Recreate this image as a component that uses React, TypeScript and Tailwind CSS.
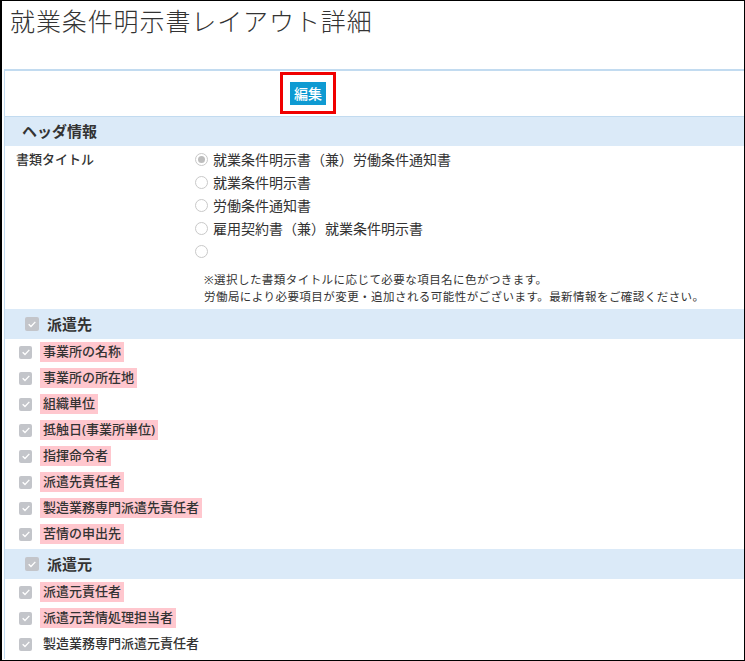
import React from 'react';

const FONT = '"Noto Sans", "Noto Sans CJK JP", sans-serif';

const radios = [
  '就業条件明示書（兼）労働条件通知書',
  '就業条件明示書',
  '労働条件通知書',
  '雇用契約書（兼）就業条件明示書',
  '',
];

type Item = { label: string; required: boolean };

const sections: { title: string; items: Item[] }[] = [
  {
    title: '派遣先',
    items: [
      { label: '事業所の名称', required: true },
      { label: '事業所の所在地', required: true },
      { label: '組織単位', required: true },
      { label: '抵触日(事業所単位)', required: true },
      { label: '指揮命令者', required: true },
      { label: '派遣先責任者', required: true },
      { label: '製造業務専門派遣先責任者', required: true },
      { label: '苦情の申出先', required: true },
    ],
  },
  {
    title: '派遣元',
    items: [
      { label: '派遣元責任者', required: true },
      { label: '派遣元苦情処理担当者', required: true },
      { label: '製造業務専門派遣元責任者', required: false },
    ],
  },
];

const Check = ({ big }: { big?: boolean }) => (
  <span
    className={
      'flex items-center justify-center rounded-[2px] bg-[#c3c5ca] shrink-0 ' +
      (big ? 'w-[14px] h-[14px]' : 'w-[13px] h-[13px]')
    }
  >
    <svg viewBox="0 0 12 12" className="w-[10px] h-[10px]">
      <path d="M2 6.2 L4.8 9 L10 3.4" fill="none" stroke="#fff" strokeWidth="1.6" />
    </svg>
  </span>
);

const Radio = ({ checked }: { checked?: boolean }) => (
  <span className="w-[13px] h-[13px] rounded-full border border-[#c9c9c9] bg-white flex items-center justify-center shrink-0">
    {checked && <span className="w-[7px] h-[7px] rounded-full bg-[#bdbdbd]" />}
  </span>
);

export default function App() {
  return (
    <div
      className="w-[745px] h-[661px] bg-white border border-black border-l-2 overflow-hidden text-[#333]"
      style={{ fontFamily: FONT }}
    >
      <h1 className="pl-[8px] pt-[5px] h-[68px] text-[25px] leading-[30px] font-light tracking-[0.9px]">
        就業条件明示書レイアウト詳細
      </h1>

      <div className="ml-[2px] border-l border-t-2 border-[#c2dbf0]">
        <div className="h-[45px] pl-[275px] pt-[1px]">
          <div className="inline-block border-[3px] border-[#f00000] px-[7px] py-[6px]">
            <button className="h-[23px] px-[4px] bg-[#0e9ad2] text-white text-[14px] leading-[23px] font-medium">
              編集
            </button>
          </div>
        </div>

        <div className="border-t border-[#c2dbf0] bg-[#dbeaf8] h-[30px] pl-[17px] flex items-center text-[15px] font-bold">
          ヘッダ情報
        </div>

        <div className="flex pt-[2px]">
          <div className="w-[190px] pl-[11px] h-[23px] flex items-center text-[13px] font-medium">書類タイトル</div>
          <div className="flex flex-col">
            {radios.map((r, i) => (
              <div key={i} className="h-[23px] flex items-center gap-[5px] text-[14px]">
                <Radio checked={i === 0} />
                <span>{r}</span>
              </div>
            ))}
          </div>
        </div>
        <div className="pl-[199px] pt-[8px] pb-[4px] text-[11.5px] leading-[17px] tracking-[0.45px]">
          <p>※選択した書類タイトルに応じて必要な項目名に色がつきます。</p>
          <p>労働局により必要項目が変更・追加される可能性がございます。最新情報をご確認ください。</p>
        </div>

        {sections.map((s) => (
          <div key={s.title} className="pb-[2px]">
            <div className="bg-[#dbeaf8] h-[30px] pl-[20px] flex items-center gap-[8px] text-[15px] font-bold">
              <Check big />
              <span>{s.title}</span>
            </div>
            {s.items.map((it) => (
              <div key={it.label} className="h-[26px] pl-[14px] flex items-center gap-[8px]">
                <Check />
                <span
                  className={
                    'h-[20px] px-[3px] flex items-center text-[13px] font-medium ' +
                    (it.required ? 'bg-[#ffc7ce]' : '')
                  }
                >
                  {it.label}
                </span>
              </div>
            ))}
          </div>
        ))}
      </div>
    </div>
  );
}
